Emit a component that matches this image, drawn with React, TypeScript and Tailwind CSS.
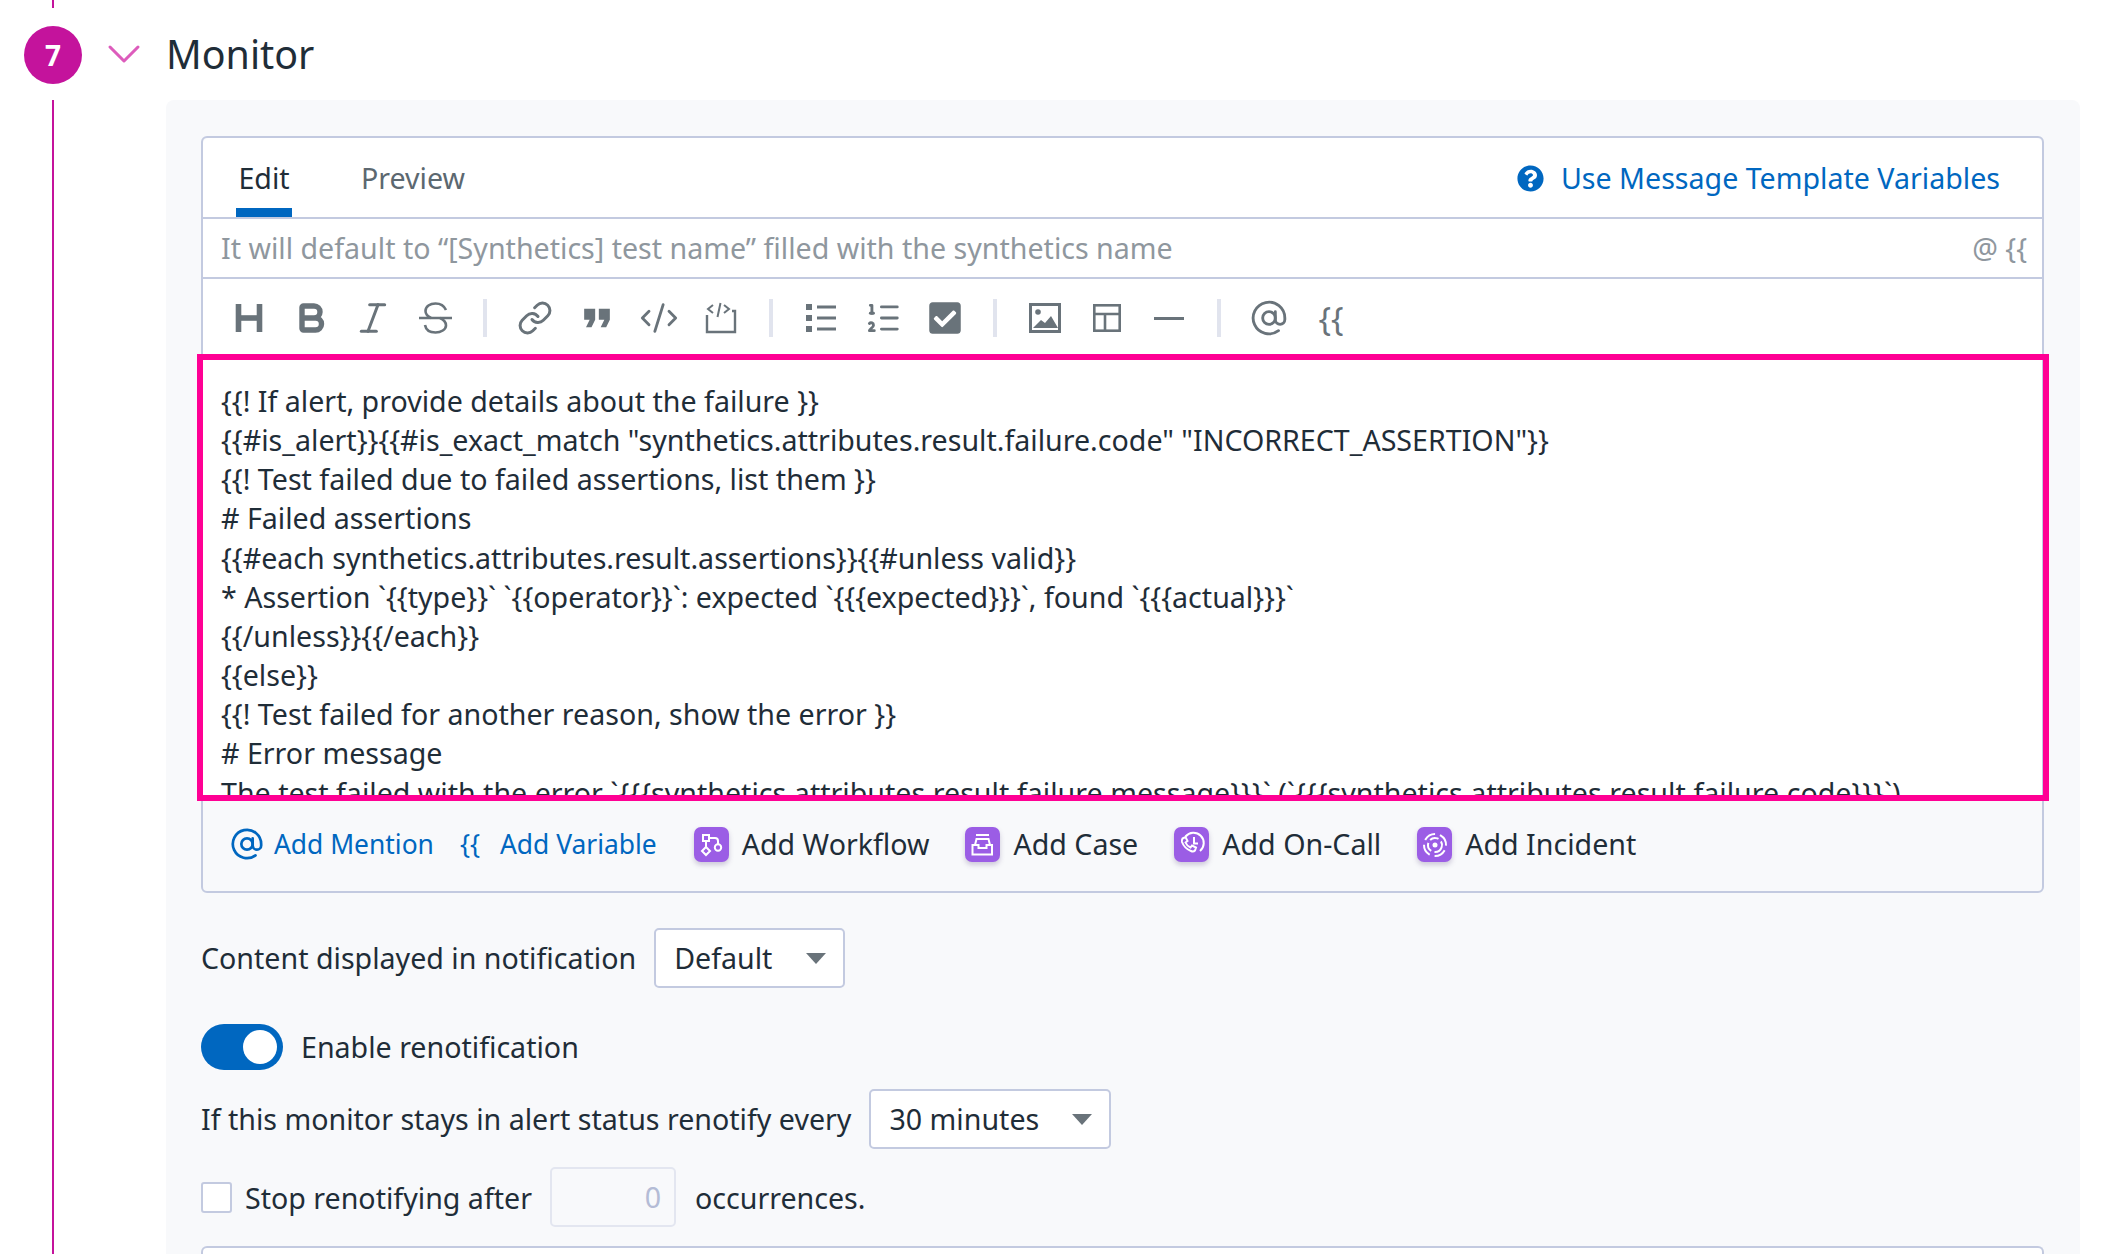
import type { ReactNode } from 'react'
import { AtSign, Bold, ChevronDown, CodeXml, Heading, Italic, Link, ListOrdered } from 'lucide-react'
import { FaCheckSquare, FaQuestionCircle } from 'react-icons/fa'
import { MdFormatQuote } from 'react-icons/md'

const lines = [
  '{{! If alert, provide details about the failure }}',
  '{{#is_alert}}{{#is_exact_match "synthetics.attributes.result.failure.code" "INCORRECT_ASSERTION"}}',
  '{{! Test failed due to failed assertions, list them }}',
  '# Failed assertions',
  '{{#each synthetics.attributes.result.assertions}}{{#unless valid}}',
  '* Assertion `{{type}}` `{{operator}}`: expected `{{{expected}}}`, found `{{{actual}}}`',
  '{{/unless}}{{/each}}',
  '{{else}}',
  '{{! Test failed for another reason, show the error }}',
  '# Error message',
  'The test failed with the error `{{{synthetics.attributes.result.failure.message}}}` (`{{{synthetics.attributes.result.failure.code}}}`)',
]

function Tool({ children }: { children: ReactNode }) {
  return <button className="flex h-[40px] w-[62px] items-center justify-center text-[#69737a]">{children}</button>
}

function Sep() {
  return <div className="mx-[17px] h-[38px] w-[4px] bg-[#e1e4ee]" />
}

function Purple({ children }: { children: ReactNode }) {
  return (
    <span className="h-[35px] w-[35px] rounded-[7px] bg-[#9b5de5] shadow-[0_3px_5px_rgba(80,60,120,0.25)]">
      <svg width="35" height="35" viewBox="0 0 35 35" fill="none" stroke="white" strokeWidth="2">
        {children}
      </svg>
    </span>
  )
}

function Action({ icon, label, className }: { icon: ReactNode; label: string; className: string }) {
  return (
    <span className={`flex items-center gap-[13px] text-[#1f2d38] ${className}`}>
      {icon}
      {label}
    </span>
  )
}

function Select({ label, className }: { label: string; className: string }) {
  return (
    <div className={`flex h-[60px] items-center justify-between rounded-[5px] border-2 border-[#c3cae0] bg-white ${className}`}>
      <span>{label}</span>
      <span className="h-0 w-0 border-x-[10px] border-t-[11px] border-x-transparent border-t-[#69737a]" />
    </div>
  )
}

export default function App() {
  return (
    <div className="flex h-[1254px] w-[2116px] overflow-hidden bg-white font-['Noto_Sans',sans-serif] text-[28.6px] text-[#1f2d38]">
      <div className="flex w-[108px] flex-col pl-[24px]">
        <div className="ml-[28px] h-[8px] w-[2px] bg-[#c4139c]" />
        <div className="mt-[18px] flex h-[58px] w-[58px] items-center justify-center rounded-full bg-[#c4139c] text-[28px] font-bold text-white">7</div>
        <div className="ml-[28px] mt-[16px] w-[2px] flex-1 bg-[#c4139c]" />
      </div>

      <div className="flex-1">
        <div className="flex h-[100px] items-center pt-[8px]">
          <span className="flex w-[31px] justify-center">
            <ChevronDown size={56} strokeWidth={1.3} className="shrink-0 text-[#dd5cbc]" />
          </span>
          <h2 className="ml-[27px] mt-[2px] text-[39.4px] leading-none text-[#1f2d38]">Monitor</h2>
        </div>

        <div className="ml-[58px] mr-[36px] h-full rounded-t-lg bg-[#f8f9fb] pl-[35px] pr-[36px] pt-[36px]">
          <div className="rounded-[6px] border-2 border-[#c3cae0]">
            <div className="rounded-t-[6px] bg-white">
              <div className="flex h-[81px] items-center border-b-2 border-[#c3cae0] pl-[33px] pr-[42px] pt-[2px]">
                <span className="relative flex h-full w-[56px] items-center justify-center">
                  Edit
                  <span className="absolute bottom-0 left-0 right-0 h-[9px] bg-[#0067c0]" />
                </span>
                <span className="ml-[69px] text-[#5c6870]">Preview</span>
                <span className="ml-auto flex items-center gap-[17px] text-[#0067c0]">
                  <FaQuestionCircle size={27} />
                  Use Message Template Variables
                </span>
              </div>
              <div className="flex h-[60px] items-center justify-between border-b-2 border-[#c3cae0] pl-[18px] pr-[15px] text-[#8f979e]">
                <span>It will default to “[Synthetics] test name” filled with the synthetics name</span>
                <span>@ {'{{'}</span>
              </div>
              <div className="flex h-[75px] items-center pl-[15px] pt-[3px]">
                <Tool><Heading size={42} strokeWidth={3.2} strokeLinecap="butt" /></Tool>
                <Tool><Bold size={36} strokeWidth={3.6} /></Tool>
                <Tool><Italic size={40} strokeWidth={1.8} /></Tool>
                <Tool>
                  <svg width="33" height="32" viewBox="0 0 33 32" fill="none" stroke="currentColor" strokeWidth="2.6">
                    <path d="M0 16h33" />
                    <path d="M27 8C25 3.500 20.500 1.500 16.500 1.500 11 1.500 6.500 4.500 6.500 9c0 3 2.500 5.500 5.500 7" />
                    <path d="M21 16c3.500 1.500 6 4 6 7.500 0 4-5 7-10.500 7-5 0-9.500-2-10.500-7.500" />
                  </svg>
                </Tool>
                <Sep />
                <Tool><Link size={36} strokeWidth={2} /></Tool>
                <Tool><MdFormatQuote size={44} /></Tool>
                <Tool><CodeXml size={40} strokeWidth={1.7} /></Tool>
                <Tool>
                  <svg width="32" height="32" viewBox="0 0 32 32" fill="none" stroke="currentColor" strokeWidth="2.4">
                    <path d="M2 13v17h28V9h-3" />
                    <path d="M8 3 3 7l5 4M19 3l5 4-5 4M15.500 1l-3 14" strokeWidth="2" />
                  </svg>
                </Tool>
                <Sep />
                <Tool>
                  <svg width="30" height="28" viewBox="0 0 30 28" fill="currentColor">
                    <rect x="0" y="0" width="6" height="6" />
                    <rect x="0" y="11" width="6" height="6" />
                    <rect x="0" y="22" width="6" height="6" />
                    <rect x="11" y="1.5" width="19" height="3" />
                    <rect x="11" y="12.5" width="19" height="3" />
                    <rect x="11" y="23.5" width="19" height="3" />
                  </svg>
                </Tool>
                <Tool><ListOrdered size={38} strokeWidth={1.8} /></Tool>
                <Tool><FaCheckSquare size={36} /></Tool>
                <Sep />
                <Tool>
                  <svg width="32" height="30" viewBox="0 0 32 30" fill="currentColor">
                    <path fillRule="evenodd" d="M0 0h32v30H0zM3 3v24h26V3z" />
                    <circle cx="9" cy="9" r="2.8" />
                    <path d="M4 25l8-8 4 3 6-7 7 12z" />
                  </svg>
                </Tool>
                <Tool>
                  <svg width="28" height="28" viewBox="0 0 28 28" fill="none" stroke="currentColor" strokeWidth="2.6">
                    <rect x="1.3" y="1.3" width="25.4" height="25.4" />
                    <path d="M1 10h26M12 10v17" />
                  </svg>
                </Tool>
                <Tool><div className="h-[3px] w-[30px] bg-[#69737a]" /></Tool>
                <Sep />
                <Tool><AtSign size={38} strokeWidth={1.8} /></Tool>
                <Tool><span className="text-[33px] leading-none">{'{{'}</span></Tool>
              </div>
              <div className="relative h-[447px] border-b-[6px] border-transparent">
                <div className="h-full overflow-hidden whitespace-pre pl-[18px] pt-[27px] leading-[39.15px]">
                  {lines.map((l) => <div key={l}>{l}</div>)}
                </div>
                <div className="absolute -left-[6px] -right-[7px] top-0 -bottom-[6px] border-[6px] border-[#ff0094]" />
              </div>
            </div>
            <div className="flex h-[90px] items-center pb-[3px] pl-[27px]">
              <span className="flex items-center text-[26.4px] text-[#0067c0]">
                <AtSign size={34} strokeWidth={1.9} />
                <span className="ml-[10px]">Add Mention</span>
                <span className="ml-[26px]">{'{{'}</span>
                <span className="ml-[20px]">Add Variable</span>
              </span>
              <Action className="ml-[37px]" label="Add Workflow" icon={
                <Purple>
                  <rect x="9" y="8" width="6" height="6" />
                  <path d="M12 14v6M15 11h6c2 0 3 1 3 3v3" />
                  <path d="M12 20l4 4-4 4-4-4z" />
                  <circle cx="24" cy="20.5" r="3.2" />
                </Purple>
              } />
              <Action className="ml-[36px]" label="Add Case" icon={
                <Purple>
                  <path d="M11 8h13" />
                  <path d="M10 18l1.500-6h12l1.500 6" />
                  <path d="M7.500 18h6v3h8v-3H27v9.500H7.500z" />
                </Purple>
              } />
              <Action className="ml-[36px]" label="Add On-Call" icon={
                <Purple>
                  <path d="M11.500 9.500A10.300 10.300 0 1 1 26 24" />
                  <path d="M20 10v6.500h4" />
                  <path d="M8.500 11.500l3-1.500 2 4-2 1.500c1 2.500 2.500 4 5 5l1.500-2 4 2-1 3c-1 1-3 1-4 .5-4-1.500-7.500-5-9-9-.3-1 0-2.500.500-3.500z" />
                </Purple>
              } />
              <Action className="ml-[36px]" label="Add Incident" icon={
                <Purple>
                  <circle cx="18" cy="18" r="11" strokeDasharray="12 5" transform="rotate(-60 18 18)" />
                  <circle cx="18" cy="18" r="7" strokeDasharray="9 3.500" transform="rotate(20 18 18)" />
                  <circle cx="18" cy="18" r="2.500" fill="white" stroke="none" />
                </Purple>
              } />
            </div>
          </div>

          <div className="mt-[35px] flex items-center">
            Content displayed in notification
            <Select label="Default" className="ml-[18px] w-[191px] pl-[18px] pr-[17px]" />
          </div>

          <div className="mt-[36px] flex h-[46px] items-center">
            <div className="flex h-[46px] w-[82px] items-center justify-end rounded-full bg-[#0067c0] pr-[6px]">
              <div className="h-[34px] w-[34px] rounded-full bg-white" />
            </div>
            <span className="ml-[18px]">Enable renotification</span>
          </div>

          <div className="mt-[19px] flex items-center">
            If this monitor stays in alert status renotify every
            <Select label="30 minutes" className="ml-[18px] w-[242px] pl-[18px] pr-[17px]" />
          </div>

          <div className="mt-[18px] flex items-center">
            <div className="h-[31px] w-[31px] rounded-[3px] border-2 border-[#c3cae0] bg-white" />
            <span className="ml-[13px] mt-[2px]">Stop renotifying after</span>
            <div className="ml-[18px] flex h-[60px] w-[126px] items-center justify-end rounded-[5px] border-2 border-[#e3e6f0] pr-[13px] text-[#b4bcd6]">0</div>
            <span className="ml-[19px] mt-[2px]">occurrences.</span>
          </div>

          <div className="mt-[19px] h-[40px] rounded-t-[6px] border-2 border-b-0 border-[#c3cae0] bg-white" />
        </div>
      </div>
    </div>
  )
}
